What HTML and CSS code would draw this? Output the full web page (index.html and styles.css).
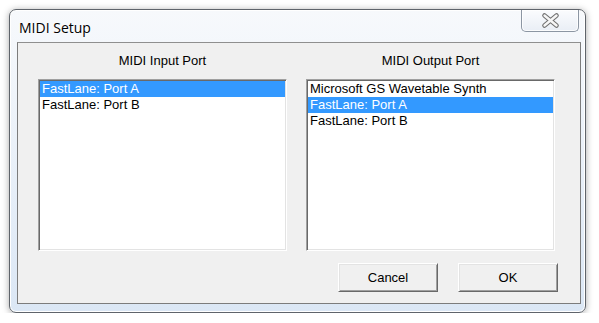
FILE: index.html
```html
<!DOCTYPE html>
<html lang="en">
<head>
  <meta charset="UTF-8" />
  <title>MIDI Setup</title>
  <link rel="stylesheet" href="styles.css">
</head>
<body>

  <!-- Dialog window -->
  <div class="window">
    <div class="titlebar">
      <span class="title">MIDI Setup</span>
      <button class="close" title="Close">
        <svg width="56" height="21" viewBox="0 0 56 21">
          <path d="M22.5 5.5 L34.5 15.5 M34.5 5.5 L22.5 15.5" stroke="#707070" stroke-width="4.6" stroke-linecap="round" fill="none" />
          <path d="M22.5 5.5 L34.5 15.5 M34.5 5.5 L22.5 15.5" stroke="#f6f6f6" stroke-width="2.4" stroke-linecap="round" fill="none" />
        </svg>
      </button>
    </div>

    <div class="client">
      <div class="ports">
        <div class="port">
          <div class="port-label">MIDI Input Port</div>
          <ul class="listbox">
            <li class="selected">FastLane: Port A</li>
            <li>FastLane: Port B</li>
          </ul>
        </div>
        <div class="port">
          <div class="port-label">MIDI Output Port</div>
          <ul class="listbox">
            <li>Microsoft GS Wavetable Synth</li>
            <li class="selected">FastLane: Port A</li>
            <li>FastLane: Port B</li>
          </ul>
        </div>
      </div>

      <div class="actions">
        <button class="btn">Cancel</button>
        <button class="btn">OK</button>
      </div>
    </div>
  </div>

</body>
</html>
```

FILE: styles.css
```css
:root {
  --face: #f0f0f0;
  --highlight: #3399ff;
  --frame-top: #f7f9fc;
  --frame-bottom: #dbe7f5;
  --dark-edge: #696969;
  --mid-edge: #a0a0a0;
  --light-edge: #e3e3e3;
}

body {
  margin: 0;
  padding: 9px 0 0 9px;
  background-color: #fff;
  font-family: 'Liberation Sans', Arial, sans-serif;
  font-size: 13px;
  color: #000;
}

.window {
  width: 577px;
  height: 304px;
  box-sizing: border-box;
  border: 1px solid #5f646b;
  border-radius: 7px;
  padding: 0 4px 8px 7px;
  background: linear-gradient(var(--frame-top), var(--frame-bottom));
  box-shadow: 0 1px 7px rgba(0, 0, 0, 0.35), inset 0 0 0 1px #fff;
  display: flex;
  flex-direction: column;
}

.titlebar {
  height: 32px;
  display: flex;
  align-items: flex-start;
}

.title {
  font-family: 'Open Sans', 'Noto Sans', sans-serif;
  font-size: 14px;
  line-height: 20px;
  padding: 8px 0 0 2px;
  text-shadow: 0 0 6px #fff, 0 0 3px #fff;
}

.close {
  margin-left: auto;
  margin-right: 2px;
  width: 58px;
  height: 22px;
  padding: 0;
  border: 1px solid #8c96a3;
  border-top: none;
  border-radius: 0 0 5px 5px;
  background: linear-gradient(#fbfcfe, #e9eef5);
  box-shadow: inset 0 0 0 1px rgba(255, 255, 255, 0.8);
  display: flex;
  align-items: center;
  justify-content: center;
}

.client {
  flex: 1;
  background-color: var(--face);
  border: 1px solid #7c7c7c;
  border-top-color: #8f8f8f;
  padding: 10px 22px 11px 20px;
  display: flex;
  flex-direction: column;
}

.ports {
  display: grid;
  grid-template-columns: 249px 249px;
  gap: 19px;
}

.port-label {
  line-height: 16px;
  text-align: center;
  margin-bottom: 10px;
}

.listbox {
  list-style: none;
  margin: 0;
  padding: 0;
  height: 172px;
  box-sizing: border-box;
  background-color: #fff;
  border: 1px solid;
  border-color: var(--mid-edge) #fff #fff var(--mid-edge);
  box-shadow: inset 1px 1px 0 var(--dark-edge), inset -1px -1px 0 var(--light-edge);
  padding: 1px;
}

.listbox li {
  line-height: 16px;
  padding-left: 2px;
  white-space: nowrap;
}

.listbox li.selected {
  background-color: var(--highlight);
  color: #fff;
}

.actions {
  margin-top: 12px;
  display: flex;
  justify-content: flex-end;
  gap: 20px;
}

.btn {
  width: 100px;
  height: 29px;
  font-family: inherit;
  font-size: 13px;
  color: #000;
  background-color: var(--face);
  border: 1px solid;
  border-color: #fff var(--dark-edge) var(--dark-edge) #fff;
  box-shadow: inset 1px 1px 0 var(--light-edge), inset -1px -1px 0 var(--mid-edge);
  padding: 0;
}
```
